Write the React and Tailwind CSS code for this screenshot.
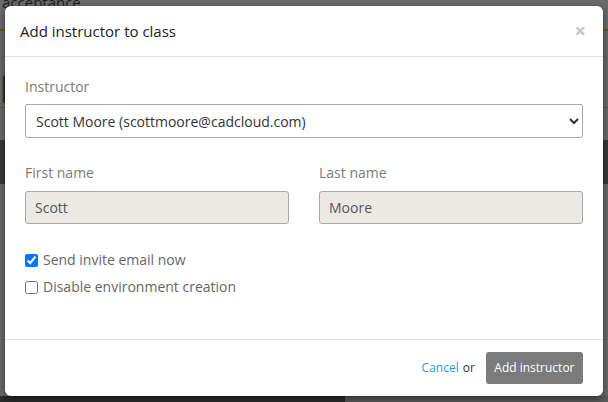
import { useState } from "react";

function Backdrop () {
    return (
        <div className="absolute inset-0 flex flex-col bg-[#6b6b6b]">
            <div className="h-[32px] px-[2px] text-[15px] leading-[10px] text-[#1f1f1f] -mt-[3px]">acceptance</div>
            <div className="h-[2px] bg-[#7a5413]"></div>
            <div className="h-[26px]"></div>
            <div className="h-[50px] text-[34px] leading-[50px] text-[#2d2d2d]">p</div>
            <div className="h-[1px] bg-[#5a5a5a]"></div>
            <div className="h-[32px]"></div>
            <div className="h-[44px] bg-[#3a3a3a]"></div>
            <div className="flex-1"></div>
            <div className="h-[6px] flex">
                <div className="w-[345px] bg-[#2b2b2b]"></div>
                <div className="flex-1 bg-[#5c5c5c]"></div>
            </div>
        </div>
    );
}

export default function App () {
    const [sendInvite, setSendInvite] = useState(true);
    const [disableEnv, setDisableEnv] = useState(false);

    const labelCls = "text-[14px] leading-[20px] text-[#7b7b7b]";
    const inputCls = "w-full h-[33px] px-[9px] rounded-[3px] border border-[#a9a9a9] bg-[#ebe9e3] text-[14px] text-[#555]";

    return (
        <div className="relative w-[608px] h-[402px] overflow-hidden font-['Open_Sans',sans-serif]">
            <Backdrop />
            {/* modal */}
            <div className="absolute left-[5px] top-[6px] w-[598px] h-[390px] bg-white rounded-[6px] shadow-[0_3px_9px_rgba(0,0,0,0.5)] flex flex-col">
                <div className="h-[51px] px-[15px] flex items-center justify-between border-b border-[#e5e5e5]">
                    <h4 className="text-[15px] text-[#222] pt-[1px]">Add instructor to class</h4>
                    <button className="text-[20px] leading-none font-bold text-[#c4c4c4] mr-[2px]">×</button>
                </div>

                <div className="flex-1 px-[20px] pt-[20px]">
                    <div className={labelCls}>Instructor</div>
                    <select className="mt-[7px] w-full h-[34px] px-[6px] rounded-[2px] border border-[#a9a9a9] bg-white text-[14px] text-[#333]" defaultValue="scott">
                        <option value="scott">Scott Moore (scottmoore@cadcloud.com)</option>
                    </select>

                    <div className="mt-[25px] grid grid-cols-2 gap-[30px]">
                        <div>
                            <div className={labelCls}>First name</div>
                            <input className={`mt-[8px] ${inputCls}`} value="Scott" readOnly />
                        </div>
                        <div>
                            <div className={labelCls}>Last name</div>
                            <input className={`mt-[8px] ${inputCls}`} value="Moore" readOnly />
                        </div>
                    </div>

                    <div className="mt-[26px] flex flex-col gap-[7px]">
                        <label className="flex items-center gap-[5px] text-[14px] leading-[20px] text-[#666]">
                            <input type="checkbox" className="m-0 w-[13px] h-[13px]" checked={sendInvite} onChange={(e)=>setSendInvite(e.target.checked)} />
                            Send invite email now
                        </label>
                        <label className="flex items-center gap-[5px] text-[14px] leading-[20px] text-[#666]">
                            <input type="checkbox" className="m-0 w-[13px] h-[13px]" checked={disableEnv} onChange={(e)=>setDisableEnv(e.target.checked)} />
                            Disable environment creation
                        </label>
                    </div>
                </div>

                <div className="h-[57px] px-[20px] flex items-center justify-end border-t border-[#e5e5e5] text-[12px]">
                    <a href="#" className="text-[#1e9bd7]">Cancel</a>
                    <span className="ml-[4px] text-[#333]">or</span>
                    <button className="ml-[11px] h-[32px] px-[8.5px] rounded-[3px] bg-[#7b7b7b] text-white text-[12px]">Add instructor</button>
                </div>
            </div>
        </div>
    );
}
